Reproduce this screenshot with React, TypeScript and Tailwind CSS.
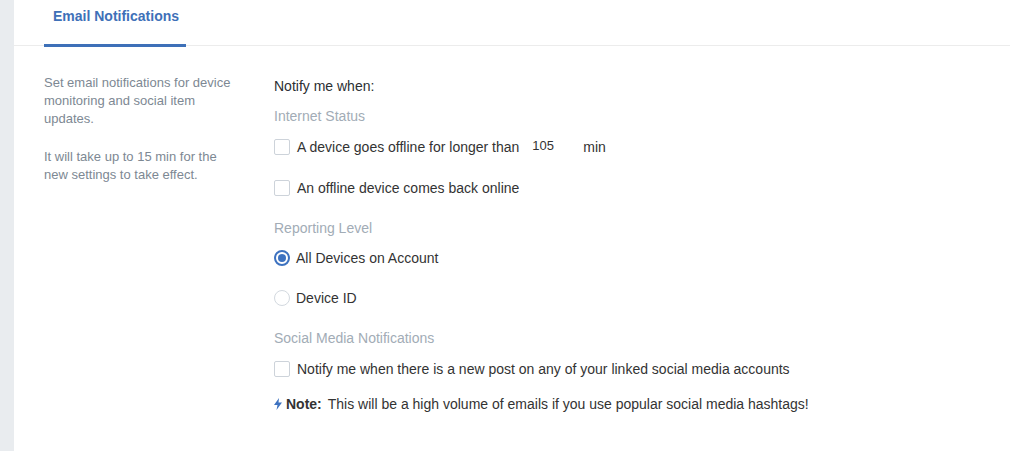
import { useState } from "react"

function Checkbox({ checked, onChange }: { checked: boolean; onChange: () => void }) {
  return (
    <button
      type="button"
      onClick={onChange}
      className={`w-4 h-4 shrink-0 rounded-[2px] border ${checked ? "border-[#3d72c0] bg-[#3d72c0]" : "border-[#cdd3da] bg-white"}`}
    />
  )
}

function Radio({ checked, onChange }: { checked: boolean; onChange: () => void }) {
  return (
    <button
      type="button"
      onClick={onChange}
      className={`w-4 h-4 shrink-0 rounded-full flex items-center justify-center ${checked ? "border-[2px] border-[#3d72c0]" : "border border-[#d3d9df]"}`}
    >
      {checked && <span className="w-2 h-2 rounded-full bg-[#3d72c0]" />}
    </button>
  )
}

export default function App() {
  const [offline, setOffline] = useState(false)
  const [online, setOnline] = useState(false)
  const [social, setSocial] = useState(false)
  const [level, setLevel] = useState("all")
  const [minutes, setMinutes] = useState("105")

  return (
    <div className="flex min-h-[451px] bg-white text-[#333] font-['Liberation_Sans',Arial,sans-serif]">
      <div className="w-[14px] shrink-0 bg-[#e9ecef]" />
      <div className="flex-1">
        <div className="h-[46px] border-b border-[#ececec] pl-[30px] flex items-end">
          <div className="relative pl-[9px] pr-[7px] h-full pt-[4px] whitespace-nowrap">
            <span className="text-[14px] leading-[20px] font-bold text-[#3e70b8]">Email Notifications</span>
            <span className="absolute left-0 right-0 -bottom-[2px] h-[3px] bg-[#3e70b8]" />
          </div>
        </div>

        <div className="flex pl-[30px] pt-[28px]">
          <div className="w-[230px] shrink-0 text-[13px] leading-[18px] text-[#7d8893]">
            <p className="w-[200px]">Set email notifications for device monitoring and social item updates.</p>
            <p className="w-[200px] mt-[20px]">It will take up to 15 min for the new settings to take effect.</p>
          </div>

          <div className="pt-[2px] text-[14px] leading-[20px]">
            <p className="text-[#2b2f33]">Notify me when:</p>
            <p className="mt-[10px] text-[#a2acb6]">Internet Status</p>
            <div className="mt-[11px] flex items-center">
              <Checkbox checked={offline} onChange={() => setOffline(!offline)} />
              <span className="ml-[7px]">A device goes offline for longer than</span>
              <input
                value={minutes}
                onChange={(e) => setMinutes(e.target.value)}
                className="ml-[13px] w-[51px] text-[13px] leading-[20px] -mt-[2px] outline-none bg-transparent"
              />
              <span>min</span>
            </div>
            <div className="mt-[21px] flex items-center">
              <Checkbox checked={online} onChange={() => setOnline(!online)} />
              <span className="ml-[7px]">An offline device comes back online</span>
            </div>

            <p className="mt-[20px] text-[#a2acb6]">Reporting Level</p>
            <div className="mt-[10px] flex items-center">
              <Radio checked={level === "all"} onChange={() => setLevel("all")} />
              <span className="ml-[6px]">All Devices on Account</span>
            </div>
            <div className="mt-[20px] flex items-center">
              <Radio checked={level === "device"} onChange={() => setLevel("device")} />
              <span className="ml-[6px]">Device ID</span>
            </div>

            <p className="mt-[20px] text-[#a2acb6]">Social Media Notifications</p>
            <div className="mt-[11px] flex items-center">
              <Checkbox checked={social} onChange={() => setSocial(!social)} />
              <span className="ml-[7px]">Notify me when there is a new post on any of your linked social media accounts</span>
            </div>
            <div className="mt-[15px] flex items-center">
              <svg width="8" height="12" viewBox="0 0 8 12" className="mr-[4px]">
                <path d="M5 0 L0 7 H3.5 L2.5 12 L8 4.5 H4.5 Z" fill="#3d72c0" />
              </svg>
              <span className="font-bold">Note:</span>
              <span className="ml-[6px]">This will be a high volume of emails if you use popular social media hashtags!</span>
            </div>
          </div>
        </div>
      </div>
    </div>
  )
}
